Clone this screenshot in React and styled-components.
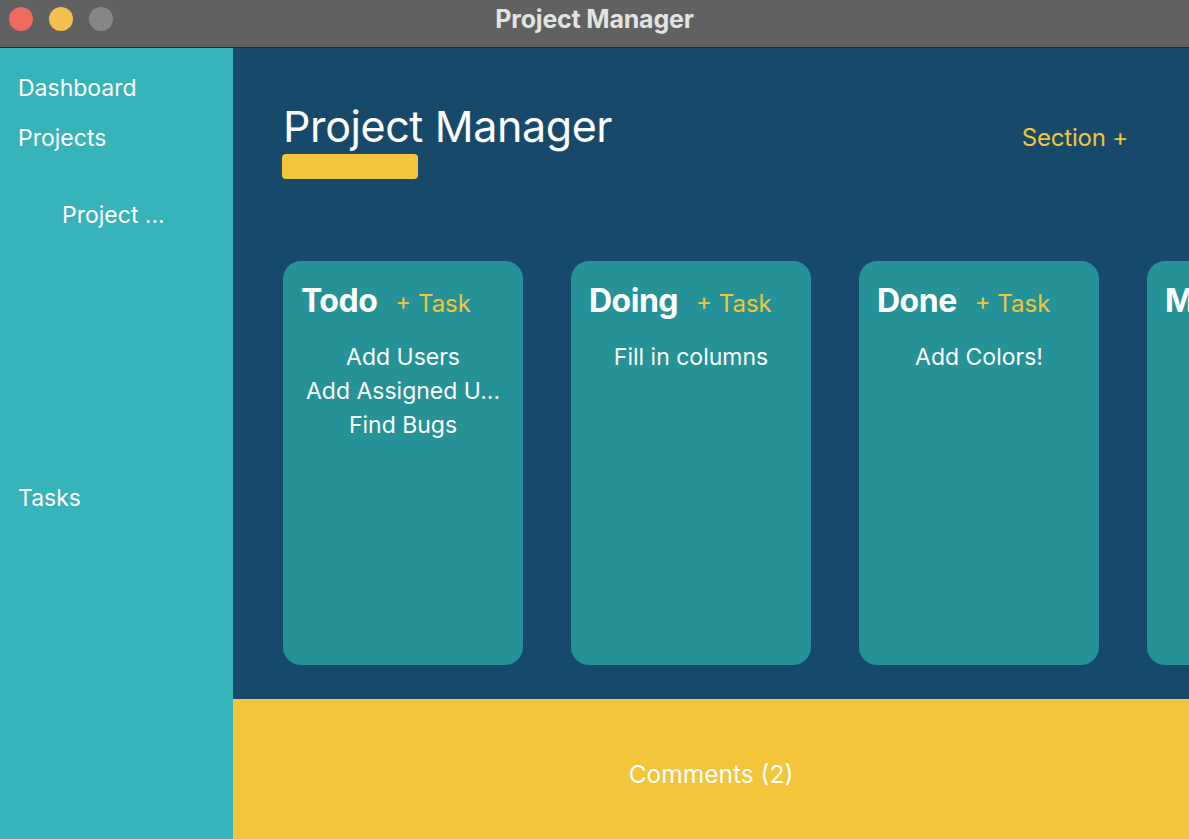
import styled, { createGlobalStyle } from "styled-components";

const GlobalStyle = createGlobalStyle`
  html, body {
    margin: 0;
    padding: 0;
    overflow: hidden;
  }
  body {
    font-family: Inter, "Noto Sans", sans-serif;
  }
`;

const columns = [
  { title: "Todo", tasks: ["Add Users", "Add Assigned U...", "Find Bugs"] },
  { title: "Doing", tasks: ["Fill in columns"] },
  { title: "Done", tasks: ["Add Colors!"] },
  { title: "More", tasks: [] },
];

export default function App() {
  return (
    <Window>
      <GlobalStyle />
      <TitleBar>
        <Lights>
          <Light color="#ee6a5f" />
          <Light color="#f5bf4f" />
          <Light color="#878787" />
        </Lights>
        <WindowTitle>Project Manager</WindowTitle>
      </TitleBar>
      <Body>
        <Sidebar>
          <NavItem>Dashboard</NavItem>
          <NavItem>Projects</NavItem>
          <SubItem>Project ...</SubItem>
          <NavItem spaced>Tasks</NavItem>
        </Sidebar>
        <Content>
          <Board>
            <Header>
              <div>
                <Heading>Project Manager</Heading>
                <Underline />
              </div>
              <AddLink>Section +</AddLink>
            </Header>
            <Columns>
              {columns.map((col) => (
                <Card key={col.title}>
                  <CardHead>
                    <CardTitle>{col.title}</CardTitle>
                    <TaskLink>+ Task</TaskLink>
                  </CardHead>
                  <TaskList>
                    {col.tasks.map((t) => (
                      <Task key={t}>{t}</Task>
                    ))}
                  </TaskList>
                </Card>
              ))}
            </Columns>
          </Board>
          <Comments>Comments (2)</Comments>
        </Content>
      </Body>
    </Window>
  );
}

const Window = styled.div`
  width: 1189px;
  height: 839px;
  display: flex;
  flex-direction: column;
  overflow: hidden;
`;

const TitleBar = styled.div`
  position: relative;
  height: 47px;
  flex-shrink: 0;
  background: #616161;
  border-bottom: 1px solid #2a2a2a;
  display: flex;
  align-items: center;
  justify-content: center;
`;

const Lights = styled.div`
  position: absolute;
  left: 9px;
  top: 7px;
  display: flex;
  gap: 16px;
`;

const Light = styled.span`
  width: 24px;
  height: 24px;
  border-radius: 50%;
  background: ${(p) => p.color};
`;

const WindowTitle = styled.div`
  color: #e3e3e3;
  font-size: 25px;
  font-weight: 700;
  margin-top: -10px;
  letter-spacing: -0.2px;
`;

const Body = styled.div`
  flex: 1;
  display: flex;
  min-height: 0;
`;

const Sidebar = styled.nav`
  width: 233px;
  flex-shrink: 0;
  background: #37b3ba;
  display: flex;
  flex-direction: column;
  padding: 24px 0 0 18px;
  box-sizing: border-box;
`;

const NavItem = styled.div`
  color: #fff;
  font-size: 23px;
  line-height: 32px;
  margin-bottom: 18px;
  margin-top: ${(p) => (p.spaced ? "233px" : "0")};
`;

const SubItem = styled(NavItem)`
  padding-left: 44px;
  margin-top: 27px;
`;

const Content = styled.main`
  flex: 1;
  display: flex;
  flex-direction: column;
  min-width: 0;
`;

const Board = styled.section`
  height: 651px;
  flex-shrink: 0;
  background: #174a6a;
  padding: 50px 0 0 50px;
  box-sizing: border-box;
  overflow: hidden;
`;

const Header = styled.div`
  display: flex;
  justify-content: space-between;
  align-items: flex-start;
  padding-right: 63px;
`;

const Heading = styled.h1`
  margin: 0;
  color: #fff;
  font-size: 43px;
  font-weight: 400;
  line-height: 56px;
  letter-spacing: -0.4px;
`;

const Underline = styled.div`
  width: 136px;
  height: 25px;
  border-radius: 4px;
  background: #f2c53b;
  margin-top: 0;
  margin-left: -1px;
`;

const AddLink = styled.div`
  color: #f2c53b;
  font-size: 24px;
  margin-top: 25px;
  margin-right: -2px;
  letter-spacing: -0.2px;
`;

const Columns = styled.div`
  display: flex;
  gap: 48px;
  margin-top: 82px;
`;

const Card = styled.div`
  width: 240px;
  height: 404px;
  flex-shrink: 0;
  border-radius: 18px;
  background: #249296;
  padding: 20px 18px;
  box-sizing: border-box;
`;

const CardHead = styled.div`
  display: flex;
  align-items: baseline;
  gap: 18px;
  white-space: nowrap;
`;

const CardTitle = styled.div`
  color: #fff;
  font-size: 32px;
  font-weight: 700;
  letter-spacing: -0.5px;
`;

const TaskLink = styled.div`
  color: #f2c53b;
  font-size: 24px;
`;

const TaskList = styled.div`
  display: flex;
  flex-direction: column;
  align-items: center;
  margin-top: 20px;
`;

const Task = styled.div`
  color: #fff;
  font-size: 23px;
  line-height: 34px;
  white-space: nowrap;
`;

const Comments = styled.footer`
  flex: 1;
  background: #f2c53b;
  color: #fff;
  font-size: 24.5px;
  display: flex;
  justify-content: center;
  padding-top: 60px;
  box-sizing: border-box;
`;
